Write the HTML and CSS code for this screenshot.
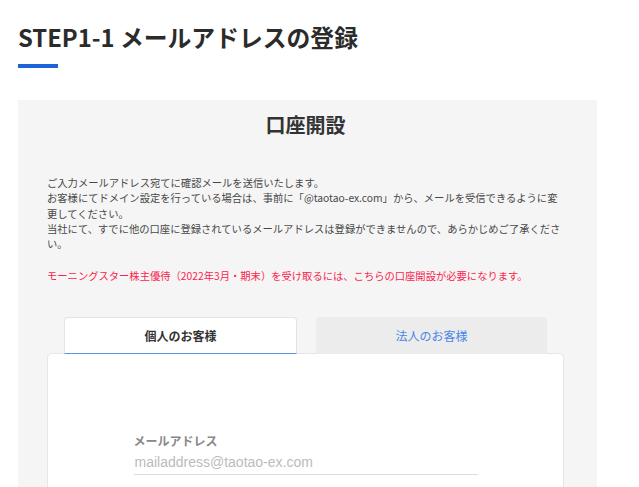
FILE: index.html
```html
<!DOCTYPE html>
<html lang="ja">

<head>
    <meta charset="UTF-8">
    <title>STEP1-1 メールアドレスの登録</title>
    <link rel="stylesheet" href="styles.css">
</head>

<body>
    <div class="page">
        <h1 class="step-title">STEP1-1 メールアドレスの登録</h1>
        <div class="step-bar"></div>

        <div class="box">
            <h2>口座開設</h2>
            <p class="notice">
                ご入力メールアドレス宛てに確認メールを送信いたします。<br>
                お客様にてドメイン設定を行っている場合は、事前に「@taotao-ex.com」から、メールを受信できるように変更してください。<br>
                当社にて、すでに他の口座に登録されているメールアドレスは登録ができませんので、あらかじめご了承ください。
            </p>
            <p class="notice-red">モーニングスター株主優待（2022年3月・期末）を受け取るには、こちらの口座開設が必要になります。</p>

            <div class="tabs">
                <a class="tab active">個人のお客様</a>
                <a class="tab">法人のお客様</a>
            </div>
            <div class="panel">
                <form class="form">
                    <label for="mail">メールアドレス</label>
                    <input type="email" id="mail" placeholder="mailaddress@taotao-ex.com">
                </form>
            </div>
        </div>
    </div>
</body>

</html>
```

FILE: styles.css
```css
body {
    margin: 0;
    font-family: 'Noto Sans CJK JP', sans-serif;
    background: #fff;
    color: #333;
}

.page {
    padding: 19px 0 0 18px;
    width: 579px;
}

.step-title {
    margin: 0;
    font-size: 23.8px;
    line-height: 36px;
    font-weight: bold;
    color: #2b2b2b;
}

.step-bar {
    width: 40px;
    height: 4px;
    margin-top: 9px;
    background: #1c64d8;
}

.box {
    margin-top: 32px;
    background: #f5f5f5;
    padding: 10px 33px 0 29px;
}

h2 {
    margin: 0;
    text-align: center;
    font-size: 20px;
    line-height: 30px;
    font-weight: bold;
    color: #333;
}

.notice {
    margin: 35px 0 0;
    font-size: 10.3px;
    line-height: 15.3px;
    color: #484848;
}

.notice-red {
    margin: 16.5px 0 0;
    font-size: 10.3px;
    line-height: 15.3px;
    color: #fb1e4e;
}

.tabs {
    display: flex;
    gap: 19px;
    margin: 34px 17px -1px;
    position: relative;
    z-index: 1;
}

.tab {
    flex: 1;
    height: 36px;
    display: flex;
    align-items: center;
    justify-content: center;
    font-size: 12px;
    border-radius: 4px 4px 0 0;
    background: #ececec;
    color: #4a86e8;
    border-bottom: 1px solid transparent;
    cursor: pointer;
}

.tab.active {
    background: #fff;
    color: #333;
    font-weight: bold;
    border: 1px solid #e3e3e3;
    border-bottom: 1px solid #5b93e0;
    height: 35px;
}

.panel {
    background: #fff;
    border: 1px solid #e6e6e6;
    border-radius: 5px;
    padding: 78px 0 80px;
}

.form {
    width: 344px;
    margin: 0 auto;
}

label {
    display: block;
    font-size: 12px;
    line-height: 18px;
    font-weight: bold;
    color: #888;
}

input {
    display: block;
    width: 100%;
    box-sizing: border-box;
    height: 25px;
    padding: 0 1px;
    border: none;
    border-bottom: 1px solid #ddd;
    background: transparent;
    font-family: 'Liberation Sans', Arial, sans-serif;
    font-size: 14px;
    color: #333;
    outline: none;
}

input::placeholder {
    color: #bbb;
}
```
